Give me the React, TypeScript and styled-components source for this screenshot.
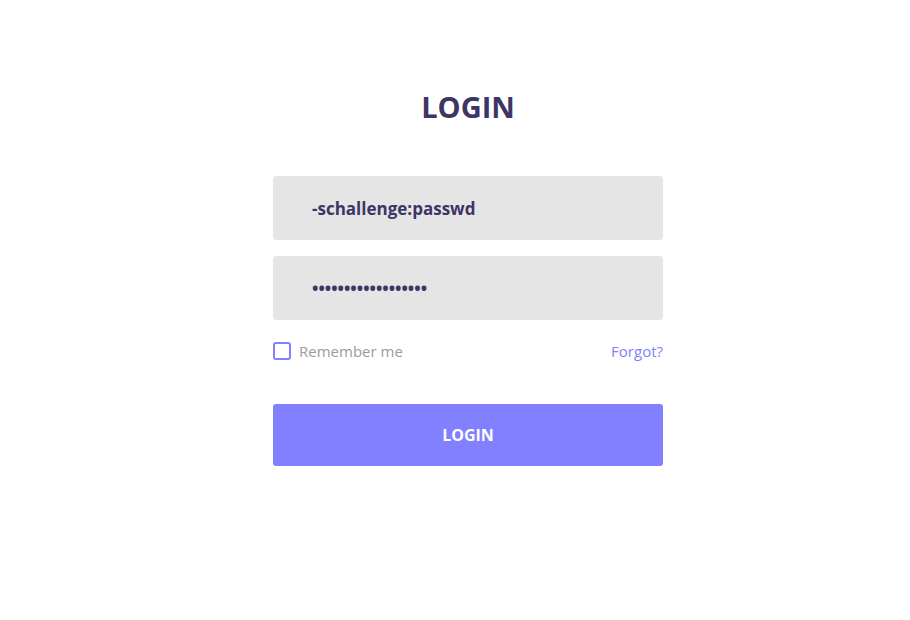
import React from "react";
import styled, { createGlobalStyle } from "styled-components";

const Global = createGlobalStyle`
  html, body { margin: 0; padding: 0; background: #ffffff; }
  body { font-family: "Open Sans", "Noto Sans", sans-serif; }
  * { box-sizing: border-box; }
`;

const Page = styled.div`
  width: 910px;
  height: 620px;
  display: flex;
  justify-content: center;
  padding-left: 26px;
  padding-top: 86px;
`;

const Form = styled.form`
  width: 390px;
  display: flex;
  flex-direction: column;
`;

const Title = styled.h1`
  margin: 0 0 48px;
  text-align: center;
  font-size: 29px;
  line-height: 42px;
  font-weight: 700;
  color: #3d3566;
`;

const Field = styled.input`
  width: 100%;
  height: 64px;
  border: none;
  border-radius: 3px;
  background: #e5e5e5;
  padding: 0 0 0 39px;
  margin-bottom: 16px;
  font-family: inherit;
  font-size: 17px;
  font-weight: 700;
  color: #3d3566;
  outline: none;
`;

const Row = styled.div`
  display: flex;
  align-items: center;
  justify-content: space-between;
  margin-top: 6px;
  height: 18px;
`;

const Check = styled.label`
  display: flex;
  align-items: center;
  gap: 8px;
  font-size: 15px;
  color: #9b9b9b;
`;

const Box = styled.span`
  width: 18px;
  height: 18px;
  border: 2px solid #8280ff;
  border-radius: 3px;
  display: inline-block;
`;

const Link = styled.a`
  font-size: 15px;
  color: #8280ff;
  text-decoration: none;
`;

const Button = styled.button`
  margin-top: 44px;
  height: 62px;
  width: 100%;
  border: none;
  border-radius: 3px;
  background: #8280ff;
  color: #ffffff;
  font-family: inherit;
  font-size: 16px;
  font-weight: 700;
`;

export default function App() {
  return (
    <>
      <Global />
      <Page>
        <Form onSubmit={(e) => e.preventDefault()}>
          <Title>LOGIN</Title>
          <Field type="text" defaultValue="-schallenge:passwd" />
          <Field type="password" defaultValue="abcdefghijklmnopqr" />
          <Row>
            <Check>
              <Box />
              Remember me
            </Check>
            <Link href="#">Forgot?</Link>
          </Row>
          <Button type="button">LOGIN</Button>
        </Form>
      </Page>
    </>
  );
}
